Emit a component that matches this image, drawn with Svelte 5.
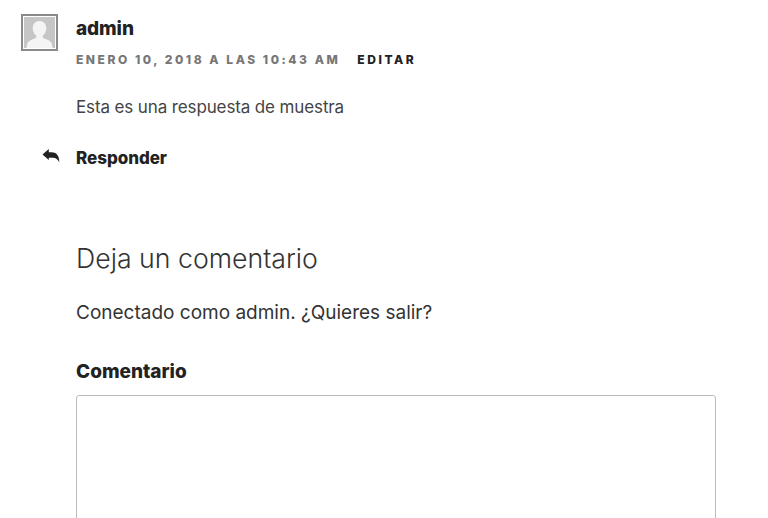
<script>
  const name = 'admin';
</script>

<div class="page">
  <article class="comment">
    <div class="avatar">
      <svg viewBox="0 0 32 32" width="31" height="31" aria-hidden="true">
        <rect width="32" height="32" fill="#c6c6c6" />
        <path d="M16 4c-4.500 0-7 3.200-7 7.500 0 3.200 1.500 6 3.500 7.500.5 1.500 0 2.500-2 3.500-3 1.200-6 2.300-7 4.500l-1 5h27l-1-5c-1-2.200-4-3.300-7-4.500-2-1-2.500-2-2-3.500 2-1.500 3.500-4.300 3.500-7.500 0-4.300-2.500-7.500-7-7.500z" fill="#f4f4f4" />
      </svg>
    </div>
    <div class="body">
      <h3 class="author">{name}</h3>
      <div class="meta">
        <span class="date">ENERO 10, 2018 A LAS 10:43 AM</span>
        <span class="edit">EDITAR</span>
      </div>
      <p class="text">Esta es una respuesta de muestra</p>
      <div class="reply">
        <svg class="reply-icon" viewBox="0 0 18 14" width="18" height="14" aria-hidden="true">
          <path d="M.5 5.500 6.800 0v3.300h2.700c4.800 0 7.800 3 7.800 10.200-1.600-3.700-3.800-4.800-7-4.800H6.800V11z" fill="#222" />
        </svg>
        <span>Responder</span>
      </div>
    </div>
  </article>

  <section class="form">
    <h2 class="title">Deja un comentario</h2>
    <p class="logged">Conectado como admin. ¿Quieres salir?</p>
    <label class="label" for="c">Comentario</label>
    <textarea id="c" class="area"></textarea>
  </section>
</div>

<style>
  :global(body) {
    margin: 0;
    background: #fff;
  }
  .page {
    width: 768px;
    height: 518px;
    overflow: hidden;
    box-sizing: border-box;
    padding: 14px 0 0 21px;
    font-family: Inter, "Liberation Sans", sans-serif;
    color: #333;
  }
  .comment {
    display: flex;
    gap: 18px;
  }
  .avatar {
    width: 31px;
    height: 31px;
    border: 2px solid #8a8a8a;
    padding: 1px;
    flex: none;
    line-height: 0;
  }
  .body {
    position: relative;
    flex: 1;
  }
  .author {
    margin: 4px 0 0;
    font-size: 19px;
    line-height: 22px;
    font-weight: 800;
    letter-spacing: -0.1px;
    color: #222;
  }
  .meta {
    margin-top: 13px;
    display: flex;
    gap: 17px;
    font-size: 12px;
    line-height: 14px;
    font-weight: 800;
    letter-spacing: 2.55px;
  }
  .date {
    color: #777;
  }
  .edit {
    color: #222;
  }
  .text {
    margin: 28px 0 0;
    font-size: 17px;
    line-height: 24px;
    letter-spacing: -0.125px;
    color: #444;
  }
  .reply {
    margin-top: 29px;
    font-size: 17px;
    line-height: 20px;
    font-weight: 800;
    letter-spacing: -0.05px;
    color: #222;
  }
  .reply-icon {
    position: absolute;
    left: -34px;
    bottom: 5px;
  }
  .form {
    margin: 73px 0 0 55px;
  }
  .title {
    margin: 0;
    font-size: 26.7px;
    line-height: 34px;
    font-weight: 300;
    color: #333;
  }
  .logged {
    margin: 25px 0 0;
    font-size: 19px;
    line-height: 26px;
    color: #333;
  }
  .label {
    display: block;
    margin-top: 34px;
    font-size: 19px;
    line-height: 24px;
    font-weight: 800;
    color: #222;
  }
  .area {
    display: block;
    margin-top: 11px;
    width: 640px;
    height: 200px;
    box-sizing: border-box;
    border: 1px solid #bbb;
    border-radius: 3px;
    background: #fff;
    padding: 8px;
    resize: none;
  }
</style>
